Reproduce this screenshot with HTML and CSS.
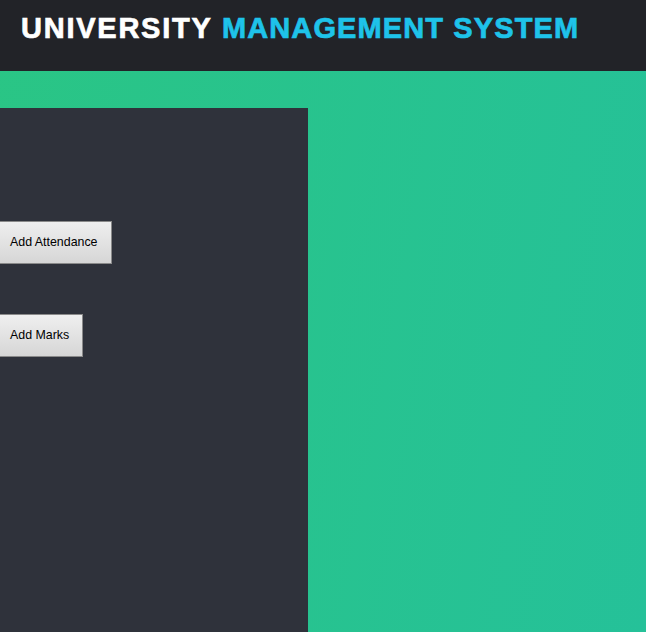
FILE: index.html
```html
<!DOCTYPE html>
<html>
<head>
<meta charset="utf-8">
<link rel="stylesheet" href="styles.css">
</head>
<body>
<header class="topbar">
  <h1 class="title"><span class="t-white">UNIVERSITY</span> <span class="t-blue">MANAGEMENT SYSTEM</span></h1>
</header>
<main class="content">
  <aside class="sidebar">
    <button class="btn btn-att">Add Attendance</button>
    <button class="btn btn-marks">Add Marks</button>
  </aside>
</main>
</body>
</html>
```
FILE: styles.css
```css
html, body {
  margin: 0;
  padding: 0;
  height: 100%;
  overflow: hidden;
}
body {
  background: linear-gradient(100deg, #2ac585 0%, #25c199 100%);
  font-family: "Liberation Sans", Arial, sans-serif;
}
.topbar {
  height: 71px;
  background: #222328;
  box-sizing: border-box;
  padding: 12px 0 0 21px;
}
.title {
  margin: 0;
  font-size: 29px;
  font-weight: 900;
  letter-spacing: 1.35px;
  line-height: 32px;
  -webkit-text-stroke: 0.7px currentColor;
}
.t-white { color: #ffffff; letter-spacing: 1.75px; }
.t-blue { color: #1ec3ea; letter-spacing: 1.12px; }
.content {
  padding-top: 37px;
  height: calc(100% - 71px);
  box-sizing: border-box;
}
.sidebar {
  width: 308px;
  height: 100%;
  background: #2f323b;
  display: flex;
  flex-direction: column;
  align-items: flex-start;
  padding-top: 113px;
  box-sizing: border-box;
}
.btn {
  margin-left: -4px;
  height: 43px;
  padding: 0 13px 1px 13px;
  font-family: "Liberation Sans", Arial, sans-serif;
  font-size: 12.4px;
  color: #000;
  background: linear-gradient(#efefef, #d6d6d6);
  border: 1px solid #8a8a8a;
  border-radius: 0;
}
.btn-marks {
  margin-top: 50px;
}
```
